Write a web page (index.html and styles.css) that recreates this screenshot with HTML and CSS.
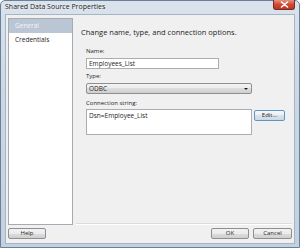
FILE: index.html
```html
<!DOCTYPE html>
<html lang="en">
<head>
    <meta charset="UTF-8">
    <title>Shared Data Source Properties</title>
    <link rel="stylesheet" href="styles.css">
</head>
<body>
    <div class="window">
        <div class="titlebar">
            <span class="title">Shared Data Source Properties</span>
            <span class="close-btn">
                <svg width="9" height="7" viewBox="0 0 9 7">
                    <path d="M1.5 1 L7.5 6 M7.5 1 L1.5 6" stroke="#fff" stroke-width="1.6" stroke-linecap="round"/>
                </svg>
            </span>
        </div>
        <div class="client">
            <div class="main">
                <ul class="nav">
                    <li class="nav-item active">General</li>
                    <li class="nav-item">Credentials</li>
                </ul>
                <div class="page">
                    <h2 class="page-title">Change name, type, and connection options.</h2>
                    <div class="fields">
                        <label class="field-label">Name:</label>
                        <div class="text-input">Employees_List</div>

                        <label class="field-label type-label">Type:</label>
                        <div class="select-box">
                            <span>ODBC</span>
                            <span class="select-arrow"></span>
                        </div>

                        <label class="field-label conn-label">Connection string:</label>
                        <div class="conn-row">
                            <div class="text-area">Dsn=Employee_List</div>
                            <button class="btn edit-btn">Edit...</button>
                        </div>
                    </div>
                    <div class="separator"></div>
                </div>
            </div>
            <div class="footer">
                <button class="btn">Help</button>
                <div class="footer-right">
                    <button class="btn">OK</button>
                    <button class="btn cancel-btn">Cancel</button>
                </div>
            </div>
        </div>
    </div>
</body>
</html>
```

FILE: styles.css
```css
body {
    margin: 0;
    padding: 0;
    font-family: "Open Sans", "DejaVu Sans", sans-serif;
    background-color: #fff;
}

.window {
    width: 300px;
    height: 248px;
    box-sizing: border-box;
    border: 1px solid #6a7f98;
    border-radius: 5px 5px 0 0;
    background: linear-gradient(#dae3ec, #cbd7e4 40%, #c2d1e2);
    display: flex;
    flex-direction: column;
}

.titlebar {
    height: 13px;
    display: flex;
    align-items: flex-start;
    padding-left: 4px;
}

.title {
    font-size: 7px;
    line-height: 12px;
    color: #1a1a1a;
    text-shadow: 0 0 3px #fff;
}

.close-btn {
    margin-left: auto;
    margin-right: 4px;
    width: 22px;
    height: 10px;
    margin-top: -1px;
    box-sizing: border-box;
    border: 1px solid #7a2a22;
    border-top: none;
    border-radius: 0 0 3px 3px;
    background: linear-gradient(#e6907f, #d04a32 50%, #c0351e);
    display: flex;
    justify-content: center;
    align-items: center;
}

.client {
    flex: 1;
    margin: 0 4px 3px 4px;
    background-color: #f0f0f0;
    border: 1px solid #a7b4c3;
    padding: 3px 2px 4px 2px;
    display: flex;
    flex-direction: column;
}

.main {
    flex: 1;
    display: flex;
    gap: 3px;
}

.nav {
    list-style: none;
    margin: 0;
    padding: 0;
    width: 65px;
    box-sizing: border-box;
    background-color: #fff;
    border: 1px solid #a4abb3;
}

.nav-item {
    font-size: 6.5px;
    height: 14px;
    line-height: 14px;
    padding-left: 6px;
    color: #1e1e1e;
}

.nav-item.active {
    background-color: #bac6d4;
    color: #f4f6f8;
}

.page {
    flex: 1;
    display: flex;
    flex-direction: column;
}

.page-title {
    margin: 8px 0 0 5px;
    font-size: 7.5px;
    font-weight: normal;
    line-height: 12px;
    color: #1e1e1e;
}

.fields {
    flex: 1;
    padding-left: 10px;
    display: flex;
    flex-direction: column;
    align-items: flex-start;
}

.field-label {
    font-size: 6px;
    line-height: 8px;
    color: #1e1e1e;
    margin-top: 9px;
    margin-bottom: 3px;
}

.type-label {
    margin-top: 3px;
}

.conn-label {
    margin-top: 5px;
    margin-bottom: 2px;
}

.text-input,
.select-box,
.text-area {
    box-sizing: border-box;
    font-size: 6.5px;
    color: #1e1e1e;
    border: 1px solid #abadb3;
    background-color: #fff;
    padding-left: 2px;
}

.text-input {
    width: 133px;
    height: 11px;
    line-height: 9px;
}

.select-box {
    width: 166px;
    height: 11px;
    line-height: 9px;
    border-color: #8e8f8f;
    border-radius: 2px;
    background: linear-gradient(#f2f2f2, #ebebeb 50%, #dddddd 50%, #cfcfcf);
    display: flex;
    justify-content: space-between;
    align-items: center;
}

.select-arrow {
    width: 0;
    height: 0;
    margin-right: 3px;
    border-left: 2px solid transparent;
    border-right: 2px solid transparent;
    border-top: 2px solid #1a1a1a;
}

.conn-row {
    display: flex;
    gap: 2px;
    align-items: flex-start;
}

.text-area {
    width: 166px;
    height: 26px;
    line-height: 9px;
    padding-top: 1px;
}

.btn {
    box-sizing: border-box;
    width: 38px;
    height: 11px;
    padding: 0;
    font-family: "Open Sans", "DejaVu Sans", sans-serif;
    font-size: 6px;
    line-height: 9px;
    color: #1e1e1e;
    border: 1px solid #8f8f8f;
    border-radius: 2px;
    background: linear-gradient(#f2f2f2, #ebebeb 50%, #dddddd 50%, #cfcfcf);
}

.edit-btn {
    width: 31px;
    margin-top: 1px;
    border-color: #5c96c4;
    background: linear-gradient(#f4f8fb, #e8eef3 50%, #dbe3ea 50%, #cfd8e0);
}

.cancel-btn {
    width: 39px;
}

.separator {
    height: 1px;
    background-color: #dcdcdc;
    border-bottom: 1px solid #fff;
}

.footer {
    margin-top: 3px;
    display: flex;
    justify-content: space-between;
}

.footer-right {
    display: flex;
    gap: 4px;
}
```
